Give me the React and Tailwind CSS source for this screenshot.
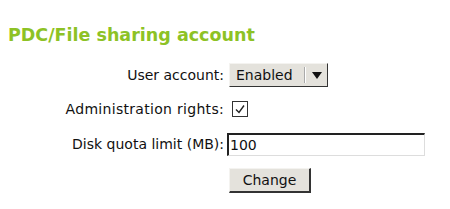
export default function App() {
  return (
    <div className="w-[450px] h-[209px] bg-white font-['DejaVu_Sans',sans-serif] text-[14px] text-[#111]">
      <h1 className="pl-[8px] pt-[24px] text-[17.5px] leading-[22px] font-bold text-[#8dc225]">PDC/File sharing account</h1>
      <div className="grid grid-cols-[224px_auto] gap-x-[5px] mt-[17px] items-center">
        <div className="text-right h-[24px] leading-[24px]">User account:</div>
        <div className="flex h-[24px] w-[99px] bg-[#e4e2dc] border border-[#f4f3f0] border-r-[#333] border-b-[#333] text-[14px]">
          <span className="flex-1 pl-[6px] leading-[22px]">Enabled</span>
          <span className="w-px bg-[#aaa] my-[3px]"></span>
          <span className="w-px bg-white my-[3px]"></span>
          <span className="w-[21px] flex items-center justify-center">
            <svg width="10" height="7" viewBox="0 0 10 7"><path d="M0 0h10L5 7z" fill="#111" /></svg>
          </span>
        </div>
        <div className="text-right mt-[10px] h-[24px] leading-[24px] tracking-[0.3px]">Administration rights:</div>
        <div className="mt-[10px] h-[24px] flex items-center pl-[3px]">
          <span className="w-[16px] h-[16px] border border-[#333] flex items-center justify-center bg-white">
            <svg width="12" height="12" viewBox="0 0 12 12"><path d="M2 6.5l3 3L10 2.5" stroke="#222" strokeWidth="1.4" fill="none" /></svg>
          </span>
        </div>
        <div className="text-right mt-[12px] h-[23px] leading-[23px]">Disk quota limit (MB):</div>
        <div className="mt-[12px] -ml-[2px] h-[23px] w-[198px] border-2 border-[#222] border-r-[#ddd] border-b-[#ddd] border-r border-b bg-white text-[14px] leading-[20px] pl-[1px]">100</div>
        <div></div>
        <div className="mt-[12px]">
          <button className="h-[25px] w-[82px] bg-[#e4e2dc] border border-[#f4f3f0] border-r-[#333] border-b-[#333] border-r-2 border-b-2 text-[14px] leading-[20px]">Change</button>
        </div>
      </div>
    </div>
  );
}
